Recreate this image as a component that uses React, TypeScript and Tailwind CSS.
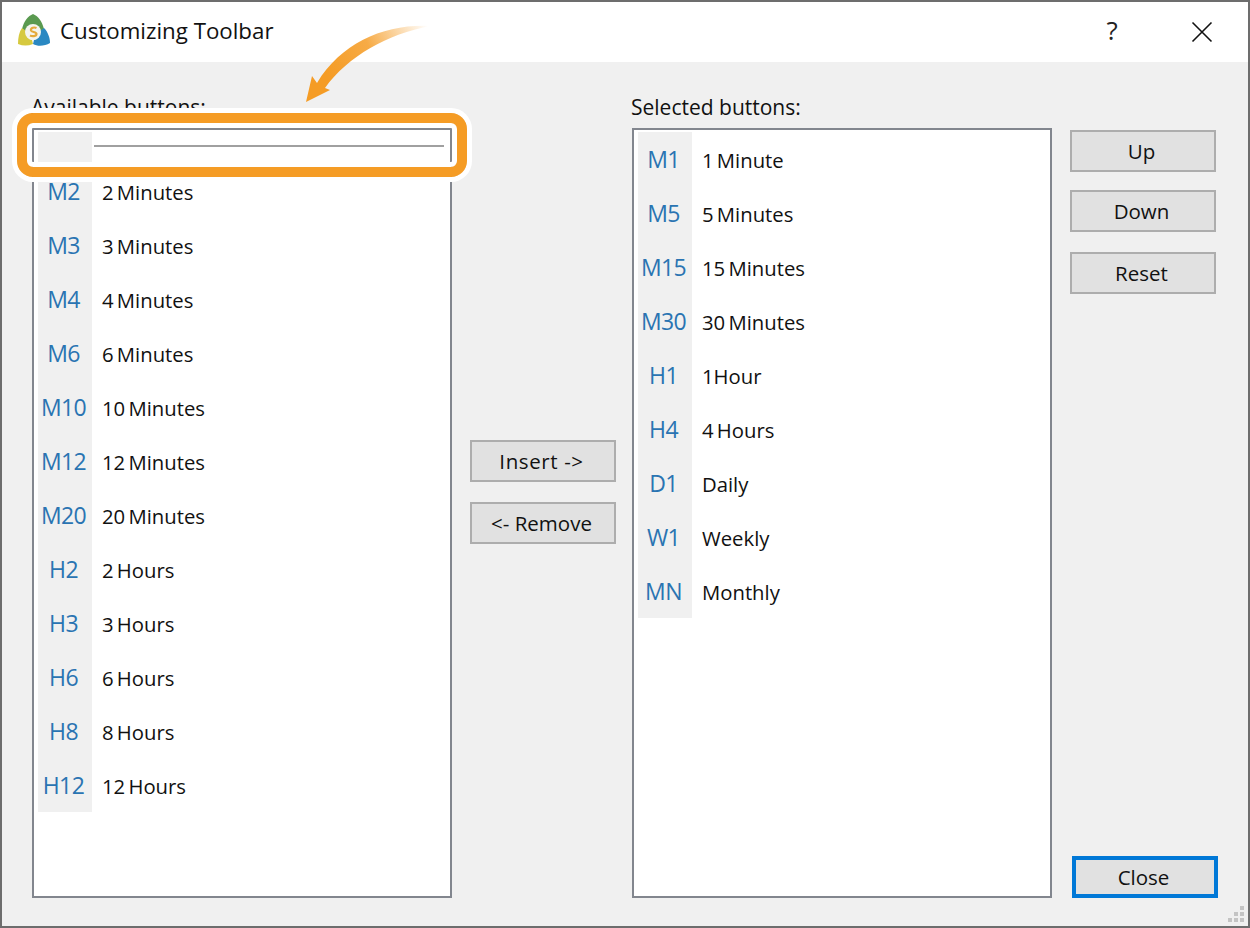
import React from "react";

const available = [
  ["M2", "2 Minutes"],
  ["M3", "3 Minutes"],
  ["M4", "4 Minutes"],
  ["M6", "6 Minutes"],
  ["M10", "10 Minutes"],
  ["M12", "12 Minutes"],
  ["M20", "20 Minutes"],
  ["H2", "2 Hours"],
  ["H3", "3 Hours"],
  ["H6", "6 Hours"],
  ["H8", "8 Hours"],
  ["H12", "12 Hours"],
];

const selected = [
  ["M1", "1 Minute"],
  ["M5", "5 Minutes"],
  ["M15", "15 Minutes"],
  ["M30", "30 Minutes"],
  ["H1", "1Hour"],
  ["H4", "4 Hours"],
  ["D1", "Daily"],
  ["W1", "Weekly"],
  ["MN", "Monthly"],
];

function Row({ code, label }: { code: string; label: string }) {
  return (
    <div className="flex h-[54px] items-center">
      <div className="flex h-full w-[54px] shrink-0 items-center justify-center bg-[#f0f0f0] pr-[3px] text-[23px] tracking-[-0.6px] text-[#2a74b2]">
        {code}
      </div>
      <div className="ml-[10px] pt-[2px] text-[20.3px] [word-spacing:-2px] text-[#111]">{label}</div>
    </div>
  );
}

function Btn({ children, className = "" }: { children: React.ReactNode; className?: string }) {
  return (
    <button className={`flex h-[42px] w-[146px] items-center justify-center border-2 border-[#adadad] bg-[#e1e1e1] pt-[1px] pr-[3px] text-[20.5px] text-[#111] ${className}`}>
      {children}
    </button>
  );
}

function Logo() {
  return (
    <svg width="34" height="34" viewBox="0 0 34 34" className="mb-[4px] shrink-0">
      <path d="M16 1 C11 3 7 8 5 16 L10 19 A7 7 0 0 1 22 19 L27 16 C25 8 21 3 16 1Z" fill="#5a9a50" />
      <path d="M5 15 C2 19 1 25 1 31 C6 33 11 33 16 31 L15 27 A8 8 0 0 1 9 18Z" fill="#d6c93f" />
      <path d="M27 15 C31 19 33 25 33 30 C28 33 21 34 16 31 L17 27 A8 8 0 0 0 23 18Z" fill="#2a88c2" />
      <circle cx="16" cy="19" r="8" fill="#f4f4ee" />
      <path d="M19.5 15 C17.5 14 13.5 14.5 14 17.5 C14.5 19.5 19.5 18.5 19.5 21 C19.5 23.5 15 23.5 13 22.5" fill="none" stroke="#e5a93a" strokeWidth="2.2" />
    </svg>
  );
}

export default function App() {
  return (
    <div className="relative flex h-[928px] w-[1250px] flex-col border-2 border-[#6d6d6d] bg-[#f0f0f0] font-['Open_Sans','Noto_Sans',sans-serif]">
      <div className="flex h-[60px] items-center bg-white pl-[15px] pr-[1px]">
        <Logo />
        <div className="mb-[2px] ml-[9px] flex-1 text-[22.3px] text-[#111]">Customizing Toolbar</div>
        <div className="flex h-full w-[90px] items-center justify-center pb-[4px] text-[26px] text-[#222]">?</div>
        <div className="flex h-full w-[90px] items-center justify-center">
          <svg width="22" height="22" viewBox="0 0 22 22">
            <path d="M1.5 1.5 L20.5 20.5 M20.5 1.5 L1.5 20.5" stroke="#111" strokeWidth="1.6" />
          </svg>
        </div>
      </div>

      <div className="flex flex-1 pl-[30px] pt-[32px]">
        <div className="flex w-[420px] flex-col">
          <div className="-ml-[1px] h-[34px] text-[21px] leading-[26px] text-[#111]">Available buttons:</div>
          <div className="h-[770px] border-2 border-[#82868e] bg-white px-[4px] pt-[2px]">
            <div className="flex h-[32px] items-start">
              <div className="h-[30px] w-[54px] bg-[#f0f0f0]" />
              <div className="ml-[2px] mr-[2px] mt-[13px] h-[2px] flex-1 bg-[#a0a0a0]" />
            </div>
            {available.map(([code, label]) => (
              <Row key={code} code={code} label={label} />
            ))}
          </div>
        </div>

        <div className="ml-[18px] flex w-[146px] flex-col gap-[20px] pt-[346px]">
          <Btn className="tracking-[0.6px]">Insert -&gt;</Btn>
          <Btn>&lt;- Remove</Btn>
        </div>

        <div className="ml-[16px] flex w-[420px] flex-col">
          <div className="-ml-[1px] h-[34px] text-[21px] leading-[26px] text-[#111]">Selected buttons:</div>
          <div className="h-[770px] border-2 border-[#82868e] bg-white px-[4px] pt-[2px]">
            {selected.map(([code, label]) => (
              <Row key={code} code={code} label={label} />
            ))}
          </div>
        </div>

        <div className="ml-[18px] flex w-[148px] flex-col pb-[28px] pt-[36px]">
          <div className="flex flex-col gap-[18px]">
            <Btn>Up</Btn>
            <Btn>Down</Btn>
            <Btn className="mt-[2px]">Reset</Btn>
          </div>
          <button className="ml-[2px] mt-auto flex h-[42px] w-[146px] items-center justify-center border-4 border-[#0078d7] bg-[#e1e1e1] pr-[3px] pt-[1px] text-[20.5px] text-[#111]">
            Close
          </button>
        </div>
      </div>

      {/* resize grip */}
      <svg width="18" height="18" viewBox="0 0 18 18" className="absolute bottom-[3px] right-[3px]">
        <path d="M13 1h4v4h-4zM7 7h4v4H7zM13 7h4v4h-4zM1 13h4v4H1zM7 13h4v4H7zM13 13h4v4h-4z" fill="#c4c4c4" />
      </svg>

      {/* tutorial highlight */}
      <div className="absolute left-[15px] top-[111px] h-[64px] w-[450px] rounded-[16px] border-[10px] border-[#f59c25] shadow-[0_0_0_5px_#ffffff,inset_0_0_0_5px_#ffffff]" />
      <svg width="140" height="90" viewBox="0 0 140 90" className="absolute left-[298px] top-[20px]">
        <defs>
          <linearGradient id="fade" x1="130" y1="8" x2="30" y2="60" gradientUnits="userSpaceOnUse">
            <stop offset="0" stopColor="#f59c25" stopOpacity="0" />
            <stop offset="0.55" stopColor="#f59c25" stopOpacity="0.85" />
            <stop offset="1" stopColor="#f59c25" />
          </linearGradient>
        </defs>
        <path d="M130 4 C85 2 42 20 17 61 L12 54 L6 80 L30 68 L25 66 C48 34 88 12 130 4Z" fill="url(#fade)" />
      </svg>
    </div>
  );
}
